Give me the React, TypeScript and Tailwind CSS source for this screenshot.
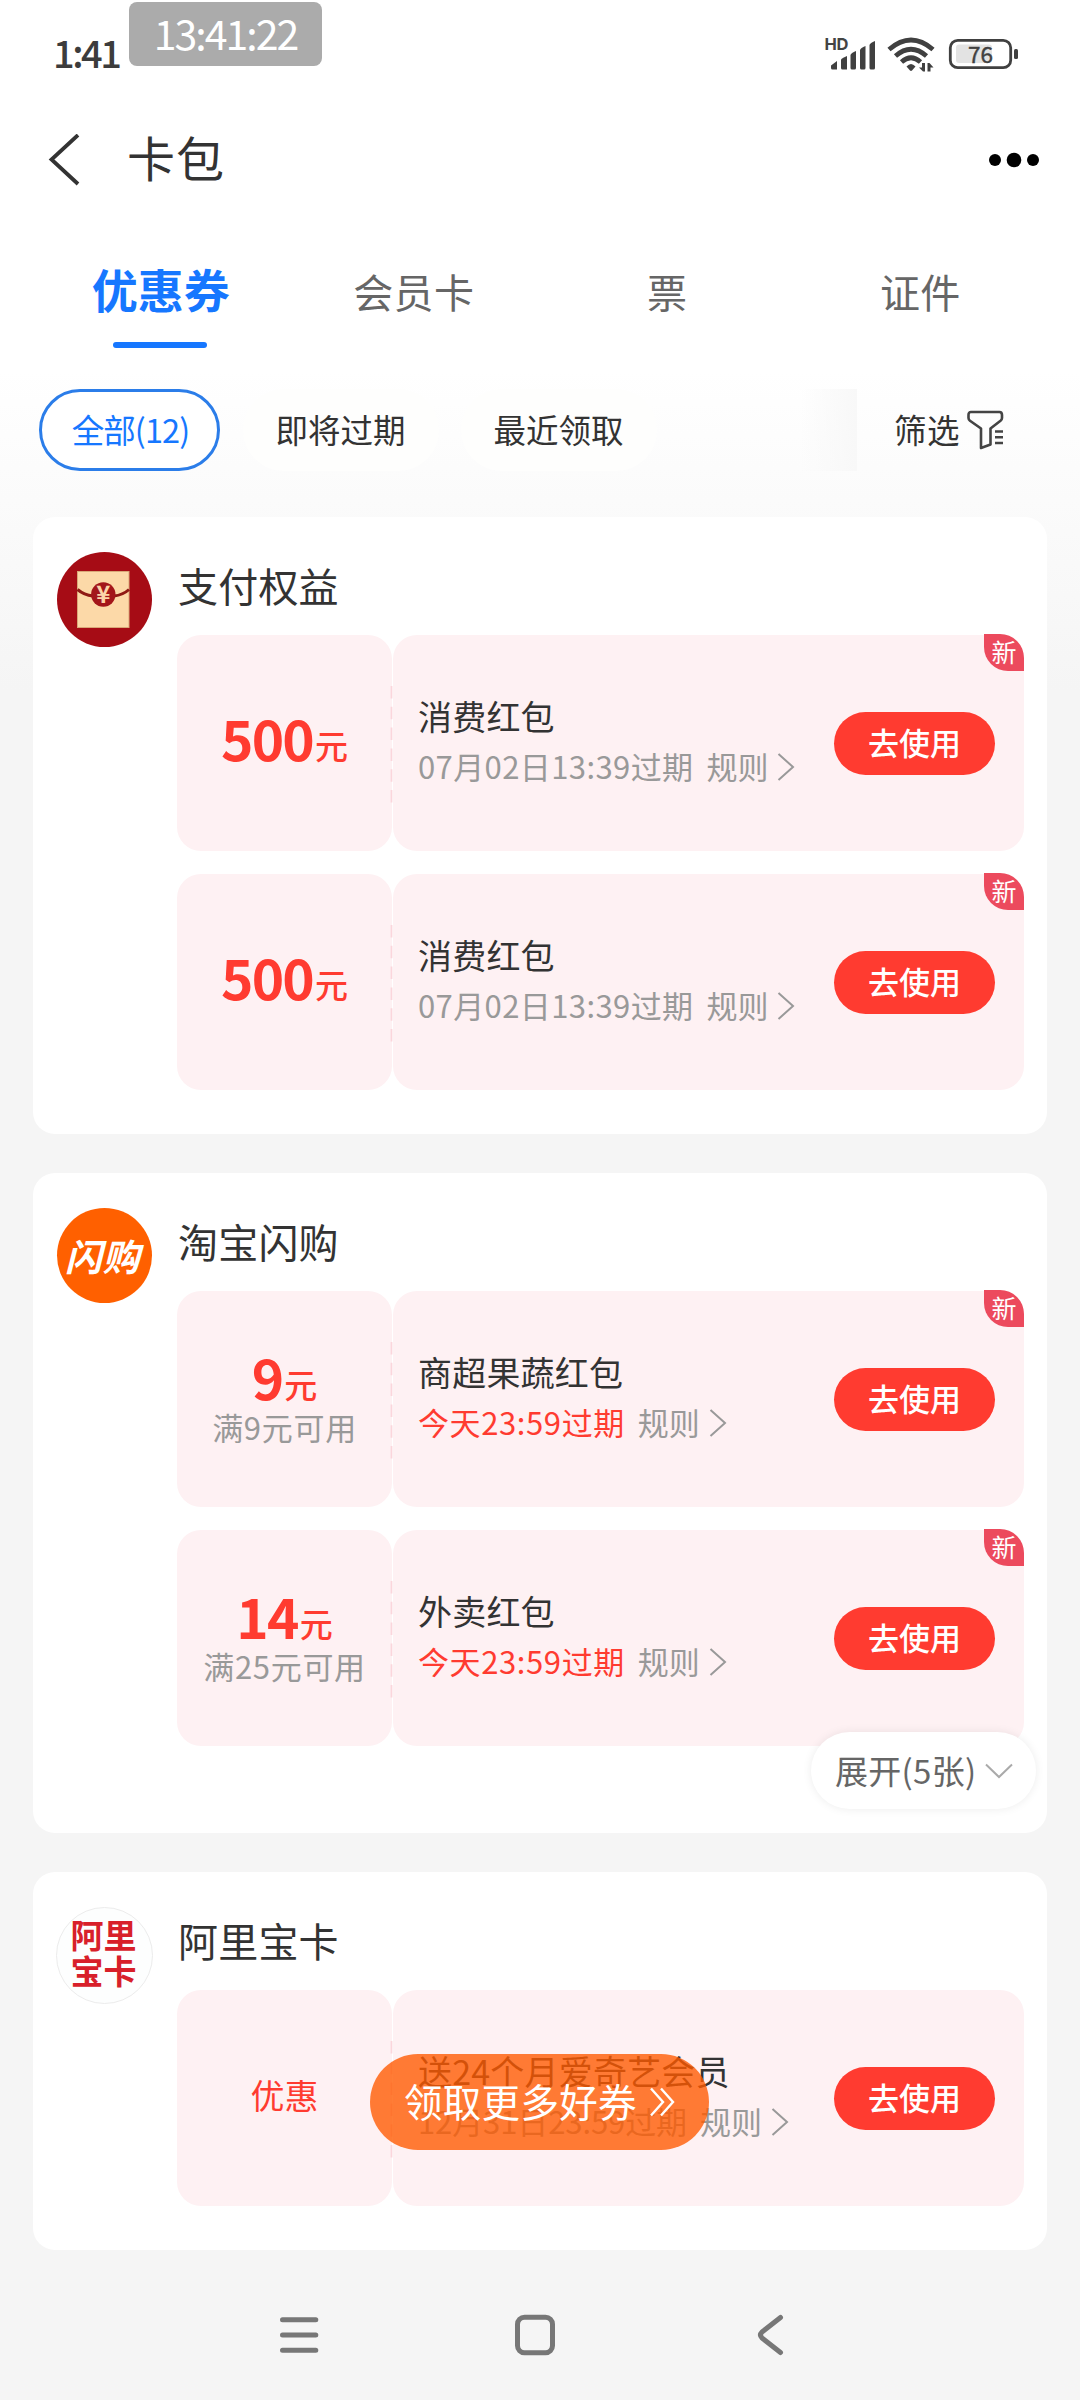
import React from 'react';

type Coupon = {
    amount?: string;
    label?: string;
    condition?: string;
    title: string;
    expiry: string;
    urgent?: boolean;
    isNew?: boolean;
};

type Shop = {
    name: string;
    logo: React.ReactNode;
    coupons: Coupon[];
    more?: number;
};

const tabs = ['优惠券', '会员卡', '票', '证件'];

function RedPacketLogo() {
    return (
        <svg width="95" height="95" viewBox="0 0 95 95">
            <circle cx="47.5" cy="47.5" r="47.5" fill="#a60c15" />
            <rect x="20.5" y="19.5" width="51.5" height="56" fill="#fcd9a8" stroke="#d9a878" strokeWidth="1" />
            <path d="M20.500 37.500Q27 43 36 44M72 37.500Q66 43 57 44" fill="none" stroke="#8f1a14" strokeWidth="3" />
            <circle cx="46.3" cy="42.5" r="12.2" fill="#a3161a" />
            <text x="46.3" y="51" textAnchor="middle" fontSize="24" fontWeight="700" fill="#fbd3a8" fontFamily="Noto Sans CJK SC, sans-serif">¥</text>
        </svg>
    );
}

function FlashLogo() {
    return (
        <div className="w-[95px] h-[95px] rounded-full bg-[#ff6000] flex items-center justify-center">
            <span className="text-white text-[37px] leading-[40px] font-bold italic whitespace-nowrap tracking-[0.5px] -ml-1 -mt-[2px]">闪购</span>
        </div>
    );
}

function AliCardLogo() {
    return (
        <div className="w-[97px] h-[97px] -ml-px rounded-full bg-[#fdfefe] border border-[#ececec] flex flex-col items-center pt-[8px] text-[#d8202a] text-[33px] leading-[36px] font-bold">
            <span className="h-[36px] -ml-[2px]">阿里</span>
            <span className="h-[36px] -ml-[2px]">宝卡</span>
        </div>
    );
}

const shops: Shop[] = [
    {
        name: '支付权益',
        logo: <RedPacketLogo />,
        coupons: [
            { amount: '500', title: '消费红包', expiry: '07月02日13:39过期', isNew: true },
            { amount: '500', title: '消费红包', expiry: '07月02日13:39过期', isNew: true },
        ],
    },
    {
        name: '淘宝闪购',
        logo: <FlashLogo />,
        more: 5,
        coupons: [
            { amount: '9', condition: '满9元可用', title: '商超果蔬红包', expiry: '今天23:59过期', urgent: true, isNew: true },
            { amount: '14', condition: '满25元可用', title: '外卖红包', expiry: '今天23:59过期', urgent: true, isNew: true },
        ],
    },
    {
        name: '阿里宝卡',
        logo: <AliCardLogo />,
        coupons: [{ label: '优惠', title: '送24个月爱奇艺会员', expiry: '12月31日23:59过期' }],
    },
];

function StatusBar() {
    return (
        <div className="relative h-[100px] flex justify-between">
            <span className="pl-[53px] pt-[29px] text-[38px] leading-[46px] font-medium tracking-[-2.500px] text-[#3c3c3c]">1:41</span>
            <div className="absolute left-[129px] top-[2px] w-[193px] h-[64px] rounded-lg bg-[#ababab] text-white text-[41px] leading-[60px] text-center tracking-[-2px]">
                13:41:22
            </div>
            <svg className="mr-[60px] mt-[34px]" width="196" height="42" viewBox="824 34 196 42">
                <text x="824.500" y="50" fontSize="16.500" fontWeight="700" fill="#444" fontFamily="Inter, sans-serif" textLength="24">HD</text>
                <g fill="#404040">
                    <path d="M831 65.500L837 61V69.500H832.500Q831 69.500 831 68Z" />
                    <path d="M841 59.500Q841 58.500 847 56V69.500H842.500Q841 69.500 841 68Z" />
                    <path d="M850.500 55Q851 53 856 51V68Q856 69.500 854.500 69.500H852Q850.500 69.500 850.500 68Z" />
                    <path d="M860 50Q860.500 48 865.500 46V68Q865.500 69.500 864 69.500H861.500Q860 69.500 860 68Z" />
                    <path d="M869.500 45Q870 43 875 41V68Q875 69.500 873.500 69.500H871Q869.500 69.500 869.500 68Z" />
                </g>
                <g fill="none" stroke="#404040" strokeWidth="4.800">
                    <path d="M889 49.500Q911 30.500 933 49.500" />
                    <path d="M895.500 56Q911 42.500 926.500 56" />
                    <path d="M901.500 62Q911 53.500 920.500 62" />
                </g>
                <path d="M906.500 66.500Q911 61.500 915.500 66.500L912 70.500Q911 71.300 910 70.500Z" fill="#404040" />
                <path d="M919 67.500H922V63H925V71.500H923ZM927.500 71.500V63H929.500L933.500 67.500H930.500V71.500Z" fill="#404040" />
                <rect x="950.300" y="40.300" width="60.400" height="27.400" rx="7.500" fill="none" stroke="#404040" strokeWidth="2.800" />
                <rect x="956" y="44.500" width="36" height="18.500" rx="3" fill="#e3e3e3" />
                <rect x="1014" y="49" width="4" height="10" rx="1.500" fill="#404040" />
                <text x="980.500" y="62.500" textAnchor="middle" fontSize="22.500" fontWeight="400" stroke="#404040" strokeWidth="0.400" fill="#404040" fontFamily="Noto Sans CJK SC, sans-serif">76</text>
            </svg>
        </div>
    );
}

function TitleBar() {
    return (
        <div className="h-[120px] pl-[48px] pr-[40px] flex items-center justify-between">
            <div className="flex items-center">
                <svg width="32" height="52" viewBox="0 0 32 52" fill="none" stroke="#333" strokeWidth="3.800">
                    <path d="M30 1L3.500 25.500L30 50" />
                </svg>
                <h1 className="ml-[47px] -mt-[8px] text-[48px] leading-[60px] font-normal tracking-[1px] text-[#333]">卡包</h1>
            </div>
            <svg width="52" height="16" viewBox="0 0 52 16">
                <circle cx="7" cy="8" r="6" />
                <circle cx="26" cy="8" r="7.300" />
                <circle cx="45" cy="8" r="6" />
            </svg>
        </div>
    );
}

function Tabs() {
    return (
        <div className="h-[130px] pl-[34px] pr-[33px] grid grid-cols-4">
            {tabs.map((tab, i) => (
                <div key={tab} className="flex flex-col items-center pt-[38px]">
                    {i === 0 ? (
                        <>
                            <span className="text-[46px] leading-[61px] h-[84px] font-bold text-[#1677ff]">{tab}</span>
                            <span className="w-[94px] h-[6px] -ml-[2px] rounded-full bg-[#1677ff]" />
                        </>
                    ) : (
                        <span className="text-[40px] leading-[66px] tracking-[0.5px] text-[#666]">{tab}</span>
                    )}
                </div>
            ))}
        </div>
    );
}

function Filters() {
    return (
        <div className="mt-[39px] h-[82px] pl-[39px] pr-[76px] flex items-center text-[32.500px] leading-[74px] text-[#333]">
            <div className="w-[181px] h-[82px] pl-[2px] rounded-full border-[3px] border-[#2b7de9] bg-white text-center tracking-[-0.900px] text-[#1677ff]">全部(12)</div>
            <div className="ml-[23px] w-[196px] h-[82px] pt-[3px] pr-px rounded-full bg-[#fefefd] text-center">即将过期</div>
            <div className="ml-[22px] w-[196px] h-[82px] pt-[3px] pr-px rounded-full bg-[#fefefd] text-center">最近领取</div>
            <div className="ml-[143px] w-[57px] h-[82px] bg-linear-to-r from-transparent to-[#f8f8f8]" />
            <div className="ml-auto flex items-center">
                <span className="-mt-[2px] tracking-[0.500px]">筛选</span>
                <svg className="ml-[7px]" width="37" height="40" viewBox="0 0 37 40" fill="none" stroke="#444" strokeWidth="2.600">
                    <path d="M4 2H32.500Q35 2 35 5V8Q35 9.500 33.500 10.800L23.500 18.500V34.500L14 38V18.500L3 10.800Q1.500 9.500 1.500 8V5Q1.500 2 4 2Z" strokeLinejoin="round" />
                    <path d="M28 21.500H36M28 27.300H36M28 33H36" />
                </svg>
            </div>
        </div>
    );
}

function CouponRow({ coupon }: { coupon: Coupon }) {
    return (
        <div className="relative h-[216px] flex text-[#333]">
            <div className="w-[215px] rounded-3xl bg-[#fef1f3] flex flex-col items-center justify-center">
                {coupon.amount ? (
                    <div className={`flex items-baseline h-[50px] text-[#ff3b30] ${coupon.condition ? 'mt-[3px] mb-[2px]' : '-mt-[13px]'}`}>
                        <span className="text-[55px] leading-[50px] font-bold tracking-[-1.800px]">{coupon.amount}</span>
                        <span className="relative -top-[2px] ml-[2px] text-[33px] leading-[50px] font-medium">元</span>
                    </div>
                ) : (
                    <span className="-mt-[6px] text-[34px] leading-[44px] text-[#ff3b30]">{coupon.label}</span>
                )}
                {coupon.condition && <span className="text-[31px] leading-[48px] tracking-[0.700px] text-[#999]">{coupon.condition}</span>}
            </div>
            <svg className="absolute left-[213px] top-[51px]" width="3" height="117" viewBox="0 0 3 117">
                <path d="M1.500 0V117" stroke="#fbd6dc" strokeWidth="1.800" strokeDasharray="12.500 8.300" />
            </svg>
            <div className="ml-px flex-1 rounded-3xl bg-[#fef1f3] pl-[25px] pr-[29px] flex items-center justify-between">
                <div className="-mt-[5px]">
                    <div className="text-[34px] leading-[50px] tracking-[0.2px]">{coupon.title}</div>
                    <div className="flex items-center text-[31px] leading-[50px] text-[#999]">
                        <span className={coupon.urgent ? 'tracking-[0.600px] text-[#ff3b30]' : coupon.isNew ? 'tracking-[0.400px]' : 'tracking-[-0.100px]'}>{coupon.expiry}</span>
                        <span className="ml-[13px]">规则</span>
                        <svg className="ml-[9px] mt-[3px]" width="18" height="28" viewBox="0 0 18 28" fill="none" stroke="#999" strokeWidth="2">
                            <path d="M1.500 1L16 14L1.500 27" />
                        </svg>
                    </div>
                </div>
                <button className="w-[161px] h-[63px] mt-[1px] pb-[4px] rounded-full bg-[#ff3b30] text-white text-[31px] leading-[58px] font-medium">去使用</button>
            </div>
            {coupon.isNew && (
                <span className="absolute right-0 -top-px w-[40px] h-[37px] rounded-tr-3xl rounded-bl-3xl bg-[#ec4a5d] text-white text-[25px] leading-[34px] text-center">新</span>
            )}
        </div>
    );
}

function ShopCard({ shop }: { shop: Shop }) {
    return (
        <section className={`relative rounded-[22px] bg-white pl-[24px] pr-[23px] pt-[35px] flex ${shop.more ? 'pb-[87px]' : 'pb-[44px]'}`}>
            <div className="w-[120px] shrink-0">{shop.logo}</div>
            <div className="flex-1">
                <h2 className="h-[83px] pl-px text-[40px] leading-[66px] tracking-[0.2px] font-normal text-[#333]">{shop.name}</h2>
                <div className="flex flex-col gap-[23px]">
                    {shop.coupons.map((coupon, i) => (
                        <CouponRow key={i} coupon={coupon} />
                    ))}
                </div>
            </div>
            {shop.more && (
                <button className="absolute right-[11px] bottom-[24px] w-[225px] h-[77px] pb-[2px] rounded-full bg-white shadow-[0_0_10px_rgba(0,0,0,0.08)] flex items-center pl-[24px] text-[33px] leading-[60px] tracking-[0.300px] text-[#666]">
                    展开({shop.more}张)
                    <svg className="ml-[9px] mt-[2px]" width="28" height="16" viewBox="0 0 28 16" fill="none" stroke="#aaa" strokeWidth="2">
                        <path d="M1 1.500L14 14L27 1.500" />
                    </svg>
                </button>
            )}
        </section>
    );
}

function SystemNav() {
    return (
        <div className="h-[149px] pl-[280px] flex items-center">
            <svg className="mt-[20px]" width="504" height="42" viewBox="280 2314 504 42" fill="none" stroke="#777" strokeWidth="5" strokeLinecap="round" strokeLinejoin="round">
                <path d="M282.500 2319.700H315.800M282.500 2335H315.800M282.500 2350.300H315.800" />
                <rect x="517.500" y="2317.300" width="35" height="35.400" rx="7" />
                <path d="M780.500 2317.500L762 2332Q759 2335 762 2338L780.500 2352.500" />
            </svg>
        </div>
    );
}

export default function App() {
    return (
        <div className="relative w-[1080px] h-[2400px] overflow-hidden bg-[#f5f5f5] bg-[linear-gradient(to_bottom,#fff_370px,#fbfbfb_500px,#f5f5f5_690px)] font-['Noto_Sans_CJK_SC',sans-serif]">
            <StatusBar />
            <TitleBar />
            <Tabs />
            <Filters />
            <main className="mt-[46px] px-[33px] flex flex-col gap-[39px]">
                {shops.map((shop) => (
                    <ShopCard key={shop.name} shop={shop} />
                ))}
            </main>
            <SystemNav />

            {/* Floating call to action */}
            <button className="absolute left-[370px] top-[2054px] w-[339px] h-[96px] pl-[34px] rounded-full bg-[rgba(255,90,0,0.79)] text-white text-[38.500px] leading-[92px] flex items-center">
                <span className="-mt-[5px] tracking-[0.3px]">领取更多好券</span>
                <svg className="ml-[12px]" width="26" height="30" viewBox="0 0 26 30" fill="none" stroke="#fff" strokeWidth="2.400">
                    <path d="M2 1.500L14 15L2 28.500M12 1.500L24 15L12 28.500" />
                </svg>
            </button>
        </div>
    );
}
